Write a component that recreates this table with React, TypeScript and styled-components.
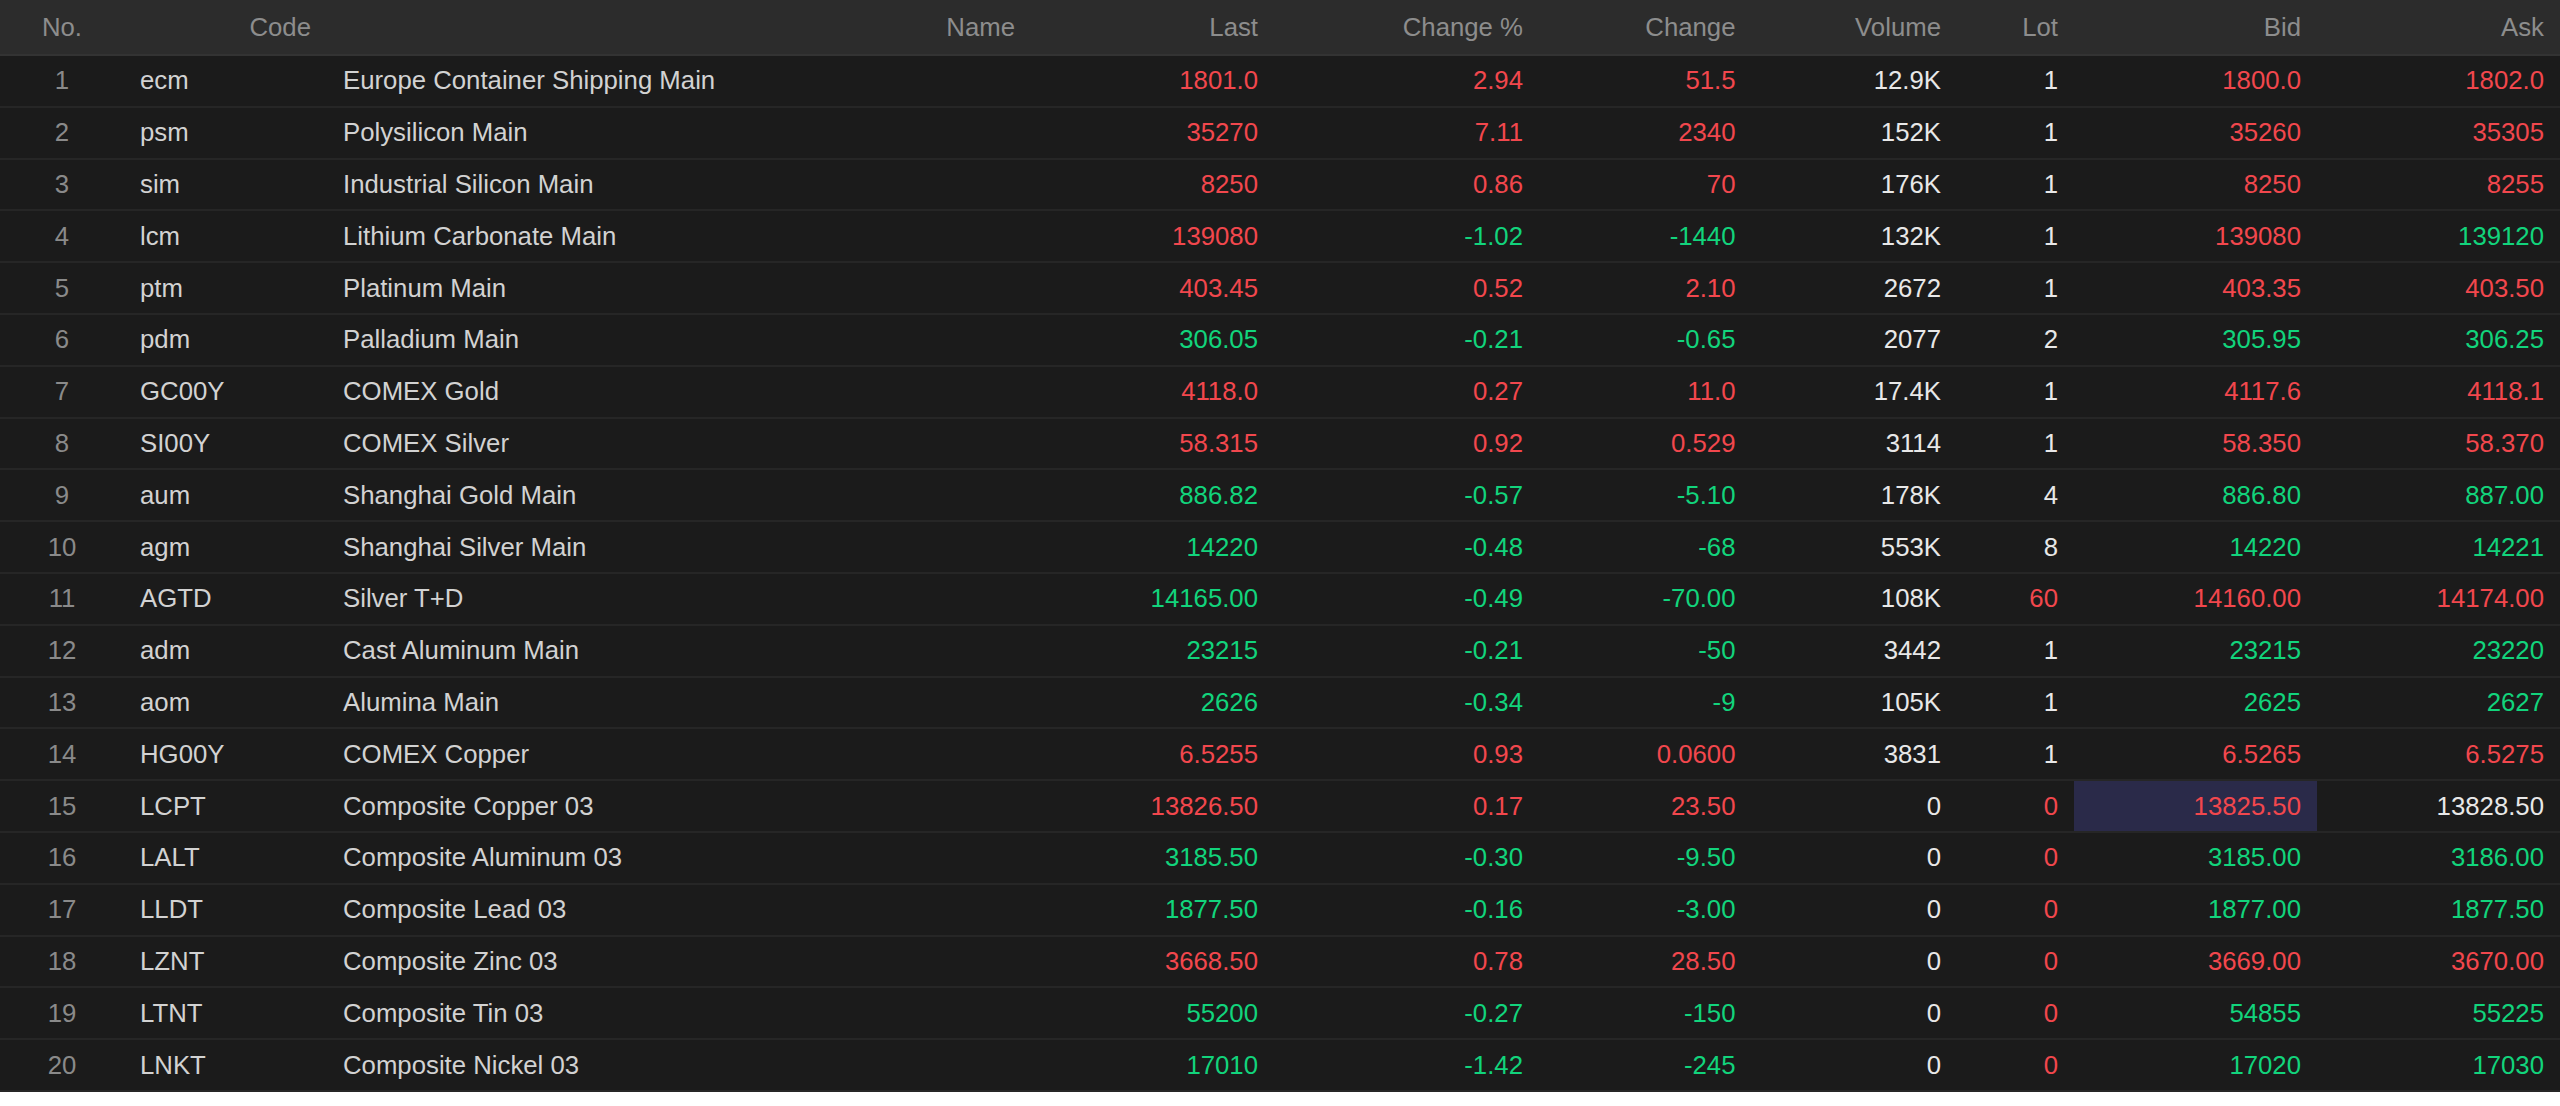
import React from "react";
import styled, { createGlobalStyle, css } from "styled-components";

const GlobalStyle = createGlobalStyle`
  html, body { margin: 0; padding: 0; background: #ffffff; }
  body { font-family: "Liberation Sans", Arial, sans-serif; }
  * { box-sizing: border-box; }
`;

type Tone = "r" | "g" | "w";
type Align = "center" | "left" | "right";

const COLS = "124px 203px 704px 243px 265px 212.5px 205.5px 117px 243px 243px";

const Table = styled.div`
  width: 2560px;
  display: flex;
  flex-direction: column;
  background: #1b1b1b;
  font-family: "Liberation Sans", Arial, sans-serif;
  font-size: 25.75px;
`;

const HeaderRow = styled.div`
  display: grid;
  grid-template-columns: ${COLS};
  height: 56px;
  background: #2c2c2c;
  border-bottom: 2px solid #333333;
`;

const HeaderCell = styled.div<{ $align: Align }>`
  display: flex;
  align-items: center;
  padding: 0 16px;
  color: #8d8d8d;
  white-space: nowrap;
  justify-content: ${(p) =>
    p.$align === "center" ? "center" : p.$align === "left" ? "flex-start" : "flex-end"};
`;

const Row = styled.div`
  display: grid;
  grid-template-columns: ${COLS};
  height: 51.8px;
  background: #1b1b1b;
  border-bottom: 2px solid #262626;
`;

const toneColor = (t: Tone) =>
  t === "r" ? "#f2474d" : t === "g" ? "#12d47c" : "#e8e8e8";

const Cell = styled.div<{ $align: Align; $tone?: Tone; $muted?: boolean; $soft?: boolean; $selected?: boolean }>`
  display: flex;
  align-items: center;
  padding: 0 16px;
  white-space: nowrap;
  justify-content: ${(p) =>
    p.$align === "center" ? "center" : p.$align === "left" ? "flex-start" : "flex-end"};
  color: ${(p) => (p.$muted ? "#8a8a8a" : p.$soft ? "#d2d2d2" : toneColor(p.$tone || "w"))};
  ${(p) =>
    p.$selected &&
    css`
      background: #2a2a49;
    `}
`;

type Quote = {
  code: string;
  name: string;
  last: [string, Tone];
  pct: [string, Tone];
  chg: [string, Tone];
  vol: string;
  lot: [string, Tone];
  bid: [string, Tone];
  ask: [string, Tone];
  sel?: boolean;
};

const rows: Quote[] = [
  { code: "ecm", name: "Europe Container Shipping Main", last: ["1801.0", "r"], pct: ["2.94", "r"], chg: ["51.5", "r"], vol: "12.9K", lot: ["1", "w"], bid: ["1800.0", "r"], ask: ["1802.0", "r"] },
  { code: "psm", name: "Polysilicon Main", last: ["35270", "r"], pct: ["7.11", "r"], chg: ["2340", "r"], vol: "152K", lot: ["1", "w"], bid: ["35260", "r"], ask: ["35305", "r"] },
  { code: "sim", name: "Industrial Silicon Main", last: ["8250", "r"], pct: ["0.86", "r"], chg: ["70", "r"], vol: "176K", lot: ["1", "w"], bid: ["8250", "r"], ask: ["8255", "r"] },
  { code: "lcm", name: "Lithium Carbonate Main", last: ["139080", "r"], pct: ["-1.02", "g"], chg: ["-1440", "g"], vol: "132K", lot: ["1", "w"], bid: ["139080", "r"], ask: ["139120", "g"] },
  { code: "ptm", name: "Platinum Main", last: ["403.45", "r"], pct: ["0.52", "r"], chg: ["2.10", "r"], vol: "2672", lot: ["1", "w"], bid: ["403.35", "r"], ask: ["403.50", "r"] },
  { code: "pdm", name: "Palladium Main", last: ["306.05", "g"], pct: ["-0.21", "g"], chg: ["-0.65", "g"], vol: "2077", lot: ["2", "w"], bid: ["305.95", "g"], ask: ["306.25", "g"] },
  { code: "GC00Y", name: "COMEX Gold", last: ["4118.0", "r"], pct: ["0.27", "r"], chg: ["11.0", "r"], vol: "17.4K", lot: ["1", "w"], bid: ["4117.6", "r"], ask: ["4118.1", "r"] },
  { code: "SI00Y", name: "COMEX Silver", last: ["58.315", "r"], pct: ["0.92", "r"], chg: ["0.529", "r"], vol: "3114", lot: ["1", "w"], bid: ["58.350", "r"], ask: ["58.370", "r"] },
  { code: "aum", name: "Shanghai Gold Main", last: ["886.82", "g"], pct: ["-0.57", "g"], chg: ["-5.10", "g"], vol: "178K", lot: ["4", "w"], bid: ["886.80", "g"], ask: ["887.00", "g"] },
  { code: "agm", name: "Shanghai Silver Main", last: ["14220", "g"], pct: ["-0.48", "g"], chg: ["-68", "g"], vol: "553K", lot: ["8", "w"], bid: ["14220", "g"], ask: ["14221", "g"] },
  { code: "AGTD", name: "Silver T+D", last: ["14165.00", "g"], pct: ["-0.49", "g"], chg: ["-70.00", "g"], vol: "108K", lot: ["60", "r"], bid: ["14160.00", "r"], ask: ["14174.00", "r"] },
  { code: "adm", name: "Cast Aluminum Main", last: ["23215", "g"], pct: ["-0.21", "g"], chg: ["-50", "g"], vol: "3442", lot: ["1", "w"], bid: ["23215", "g"], ask: ["23220", "g"] },
  { code: "aom", name: "Alumina Main", last: ["2626", "g"], pct: ["-0.34", "g"], chg: ["-9", "g"], vol: "105K", lot: ["1", "w"], bid: ["2625", "g"], ask: ["2627", "g"] },
  { code: "HG00Y", name: "COMEX Copper", last: ["6.5255", "r"], pct: ["0.93", "r"], chg: ["0.0600", "r"], vol: "3831", lot: ["1", "w"], bid: ["6.5265", "r"], ask: ["6.5275", "r"] },
  { code: "LCPT", name: "Composite Copper 03", last: ["13826.50", "r"], pct: ["0.17", "r"], chg: ["23.50", "r"], vol: "0", lot: ["0", "r"], bid: ["13825.50", "r"], ask: ["13828.50", "w"], sel: true },
  { code: "LALT", name: "Composite Aluminum 03", last: ["3185.50", "g"], pct: ["-0.30", "g"], chg: ["-9.50", "g"], vol: "0", lot: ["0", "r"], bid: ["3185.00", "g"], ask: ["3186.00", "g"] },
  { code: "LLDT", name: "Composite Lead 03", last: ["1877.50", "g"], pct: ["-0.16", "g"], chg: ["-3.00", "g"], vol: "0", lot: ["0", "r"], bid: ["1877.00", "g"], ask: ["1877.50", "g"] },
  { code: "LZNT", name: "Composite Zinc 03", last: ["3668.50", "r"], pct: ["0.78", "r"], chg: ["28.50", "r"], vol: "0", lot: ["0", "r"], bid: ["3669.00", "r"], ask: ["3670.00", "r"] },
  { code: "LTNT", name: "Composite Tin 03", last: ["55200", "g"], pct: ["-0.27", "g"], chg: ["-150", "g"], vol: "0", lot: ["0", "r"], bid: ["54855", "g"], ask: ["55225", "g"] },
  { code: "LNKT", name: "Composite Nickel 03", last: ["17010", "g"], pct: ["-1.42", "g"], chg: ["-245", "g"], vol: "0", lot: ["0", "r"], bid: ["17020", "g"], ask: ["17030", "g"] },
];

const headers: [string, Align][] = [
  ["No.", "center"],
  ["Code", "right"],
  ["Name", "right"],
  ["Last", "right"],
  ["Change %", "right"],
  ["Change", "right"],
  ["Volume", "right"],
  ["Lot", "right"],
  ["Bid", "right"],
  ["Ask", "right"],
];

export default function App() {
  return (
    <>
      <GlobalStyle />
      <Table>
        <HeaderRow>
          {headers.map(([h, a]) => (
            <HeaderCell key={h} $align={a}>
              {h}
            </HeaderCell>
          ))}
        </HeaderRow>
        {rows.map((r, i) => (
          <Row key={r.code}>
            <Cell $align="center" $muted>
              {i + 1}
            </Cell>
            <Cell $align="left" $soft>
              {r.code}
            </Cell>
            <Cell $align="left" $soft>
              {r.name}
            </Cell>
            <Cell $align="right" $tone={r.last[1]}>{r.last[0]}</Cell>
            <Cell $align="right" $tone={r.pct[1]}>{r.pct[0]}</Cell>
            <Cell $align="right" $tone={r.chg[1]}>{r.chg[0]}</Cell>
            <Cell $align="right" $tone="w">{r.vol}</Cell>
            <Cell $align="right" $tone={r.lot[1]}>{r.lot[0]}</Cell>
            <Cell $align="right" $tone={r.bid[1]} $selected={r.sel}>
              {r.bid[0]}
            </Cell>
            <Cell $align="right" $tone={r.ask[1]}>{r.ask[0]}</Cell>
          </Row>
        ))}
      </Table>
    </>
  );
}
